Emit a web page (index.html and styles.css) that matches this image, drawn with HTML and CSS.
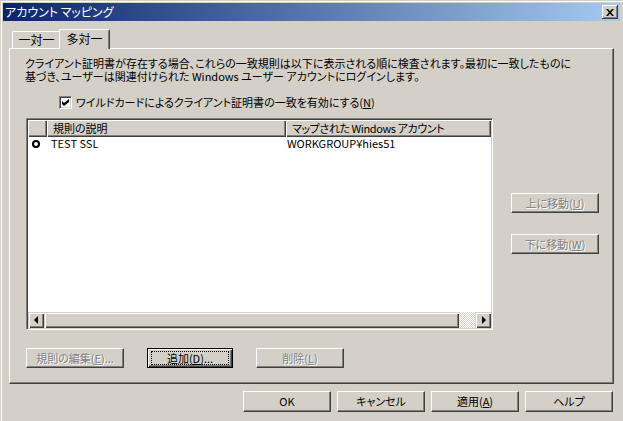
FILE: index.html
```html
<!DOCTYPE html>
<html lang="ja">
<head>
  <meta charset="UTF-8">
  <title>アカウント マッピング</title>
  <link rel="stylesheet" href="styles.css">
</head>
<body>
  <div class="window">
    <div class="titlebar">
      <span class="title">アカウント マッピング</span>
      <span class="close">
        <svg width="8" height="7" viewBox="0 0 8 7"><path d="M0 0h2l2 2.3L6 0h2L5 3.5 8 7H6L4 4.7 2 7H0l3-3.5z"/></svg>
      </span>
    </div>

    <div class="content">
      <div class="tabs">
        <div class="tab">一対一</div>
        <div class="tab active">多対一</div>
      </div>

      <div class="panel">
        <p class="desc">クライアント証明書が存在する場合、これらの一致規則は以下に表示される順に検査されます。最初に一致したものに<br>基づき、ユーザーは関連付けられた Windows ユーザー アカウントにログインします。</p>

        <div class="check">
          <span class="box">
            <svg width="7" height="7" viewBox="0 0 7 7"><path d="M0 2l2 2 5-4v3L2 7 0 5z"/></svg>
          </span>
          <span>ワイルドカードによるクライアント証明書の一致を有効にする(<u>N</u>)</span>
        </div>

        <div class="rules">
          <div class="list">
            <div class="list-head">
              <div class="hcol c0"></div>
              <div class="hcol c1">規則の説明</div>
              <div class="hcol c2">マップされた Windows アカウント</div>
            </div>
            <div class="list-body">
              <div class="row">
                <span class="c0"><i class="ring"></i></span>
                <span class="c1">TEST SSL</span>
                <span class="c2">WORKGROUP¥hies51</span>
              </div>
            </div>
            <div class="hscroll">
              <span class="sb-btn"><i class="arrow-left"></i></span>
              <span class="sb-thumb"></span>
              <span class="sb-track"></span>
              <span class="sb-btn"><i class="arrow-right"></i></span>
            </div>
          </div>

          <div class="side">
            <button class="btn" disabled>上に移動(<u>U</u>)</button>
            <button class="btn" disabled>下に移動(<u>W</u>)</button>
          </div>
        </div>

        <div class="actions">
          <button class="btn wide" disabled>規則の編集(<u>E</u>)...</button>
          <button class="btn default"><span class="focus">追加(<u>D</u>)...</span></button>
          <button class="btn" disabled>削除(<u>L</u>)</button>
        </div>
      </div>

      <div class="dialog-buttons">
        <button class="btn big">OK</button>
        <button class="btn big">キャンセル</button>
        <button class="btn big">適用(<u>A</u>)</button>
        <button class="btn big">ヘルプ</button>
      </div>
    </div>
  </div>
</body>
</html>
```

FILE: styles.css
```css
* {
  box-sizing: border-box;
}

body {
  margin: 0;
  background-color: #d4d0c8;
  color: #000;
  font-family: "Noto Sans CJK JP", "Noto Sans", sans-serif;
  font-size: 11px;
  font-feature-settings: "palt";
}

.window {
  width: 623px;
  height: 421px;
  padding: 3px;
  background-color: #d4d0c8;
  box-shadow: inset 1px 1px 0 #d4d0c8, inset 2px 2px 0 #fff;
  display: flex;
  flex-direction: column;
}

.titlebar {
  height: 18px;
  padding: 0 2px;
  display: flex;
  align-items: center;
  justify-content: space-between;
  background: linear-gradient(to right, #0a246a, #a6caf0);
  color: #fff;
  font-size: 12px;
}

.title {
  line-height: 18px;
}

.close {
  width: 16px;
  height: 14px;
  display: flex;
  align-items: center;
  justify-content: center;
  background-color: #d4d0c8;
  box-shadow: inset -1px -1px 0 #404040, inset 1px 1px 0 #fff, inset -2px -2px 0 #808080;
}

.content {
  flex: 1;
  padding: 8px 6px 0;
  display: flex;
  flex-direction: column;
}

/* tabs */
.tabs {
  height: 19px;
  padding-left: 3px;
  display: flex;
  align-items: flex-end;
  position: relative;
  z-index: 1;
}

.tab {
  width: 49px;
  height: 17px;
  line-height: 16px;
  text-align: center;
  font-size: 12px;
  background-color: #d4d0c8;
  border-top: 1px solid #fff;
  border-left: 1px solid #fff;
  border-right: 1px solid #404040;
  border-radius: 2px 2px 0 0;
  box-shadow: inset -1px 0 0 #808080;
}

.tab.active {
  width: 51px;
  height: 20px;
  margin-left: -2px;
  margin-bottom: -1px;
  line-height: 17px;
}

/* page */
.panel {
  height: 336px;
  padding: 8px 0 0 16px;
  border: 1px solid;
  border-color: #fff #404040 #404040 #fff;
  box-shadow: inset -1px -1px 0 #808080;
}

.desc {
  margin: 0 0 0 -1px;
  line-height: 13px;
  white-space: nowrap;
}

.check {
  margin: 13px 0 0 33px;
  height: 13px;
  display: flex;
  align-items: center;
  gap: 4px;
  line-height: 13px;
}

.box {
  width: 13px;
  height: 13px;
  display: flex;
  align-items: center;
  justify-content: center;
  background-color: #fff;
  border: 1px solid;
  border-color: #808080 #fff #fff #808080;
  box-shadow: inset 1px 1px 0 #404040, inset -1px -1px 0 #d4d0c8;
}

.rules {
  margin-top: 9px;
  display: flex;
}

/* list view */
.list {
  width: 467px;
  height: 212px;
  display: flex;
  flex-direction: column;
  background-color: #fff;
  border: 1px solid;
  border-color: #808080 #fff #fff #808080;
  box-shadow: inset 1px 1px 0 #404040, inset -1px -1px 0 #d4d0c8;
  padding: 1px;
}

.list-head {
  height: 17px;
  display: flex;
}

.hcol {
  background-color: #d4d0c8;
  line-height: 17px;
  padding-left: 6px;
  box-shadow: inset 1px 1px 0 #fff, inset -1px -1px 0 #404040, inset -2px -2px 0 #808080;
}

.hcol.c2 {
  letter-spacing: -0.4px;
}

.c0 {
  width: 19px;
  flex-shrink: 0;
}

.c1 {
  width: 239px;
  flex-shrink: 0;
}

.c2 {
  width: 205px;
  flex-shrink: 0;
}

.list-body {
  flex: 1;
  background-color: #fff;
}

.row {
  height: 13px;
  display: flex;
  align-items: center;
  line-height: 13px;
}

.row .c0 {
  padding-left: 4px;
  display: flex;
}

.row .c1 {
  padding-left: 4px;
}

.row .c2 {
  padding-left: 1px;
}

.ring {
  width: 8px;
  height: 8px;
  border: 2px solid #000;
  border-radius: 50%;
  background-color: #fff;
}

.hscroll {
  height: 16px;
  display: flex;
}

.sb-btn,
.sb-thumb {
  background-color: #d4d0c8;
  box-shadow: inset 1px 1px 0 #d4d0c8, inset 2px 2px 0 #fff, inset -1px -1px 0 #404040, inset -2px -2px 0 #808080;
}

.sb-btn {
  width: 16px;
  display: flex;
  align-items: center;
  justify-content: center;
}

.sb-thumb {
  width: 415px;
}

.sb-track {
  flex: 1;
  background: repeating-conic-gradient(#fff 0 25%, #d4d0c8 0 50%) 0 0 / 2px 2px;
}

.arrow-left,
.arrow-right {
  width: 0;
  height: 0;
  border-top: 4px solid transparent;
  border-bottom: 4px solid transparent;
}

.arrow-left {
  border-right: 4px solid #000;
  margin-left: -1px;
}

.arrow-right {
  border-left: 4px solid #000;
  margin-left: 1px;
}

.side {
  margin-left: 18px;
  padding-top: 75px;
  display: flex;
  flex-direction: column;
  gap: 21px;
}

/* buttons */
.btn {
  width: 88px;
  height: 20px;
  padding: 0;
  display: flex;
  align-items: center;
  justify-content: center;
  font: inherit;
  line-height: 1;
  color: #000;
  background-color: #d4d0c8;
  border: 1px solid;
  border-color: #fff #404040 #404040 #fff;
  box-shadow: inset -1px -1px 0 #808080;
  white-space: nowrap;
}

.btn:disabled {
  color: #808080;
  text-shadow: 1px 1px 0 #fff;
}

.btn.big {
  height: 21px;
}

.btn.wide {
  width: 98px;
}

.btn.default {
  width: 86px;
  padding: 2px 3px;
  border-color: #000;
  box-shadow: inset 1px 1px 0 #fff, inset -1px -1px 0 #404040, inset -2px -2px 0 #808080;
}

.focus {
  flex: 1;
  align-self: stretch;
  display: flex;
  align-items: center;
  justify-content: center;
  border: 1px dotted #000;
}

.actions {
  margin-top: 18px;
  display: flex;
  gap: 23px;
}

.dialog-buttons {
  margin-top: 7px;
  padding-right: 1px;
  display: flex;
  justify-content: flex-end;
  gap: 6px;
}
```
